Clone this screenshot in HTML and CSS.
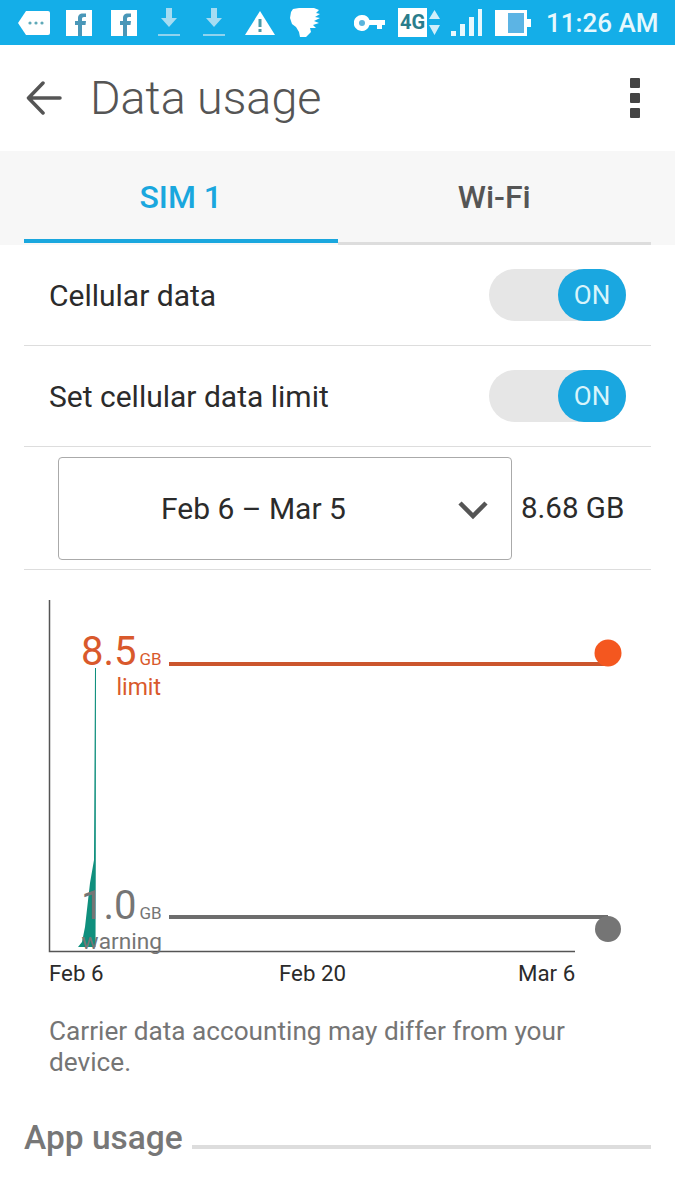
FILE: index.html
```html
<!DOCTYPE html>
<html lang="en">

<head>
  <meta charset="UTF-8">
  <meta name="viewport" content="width=device-width, initial-scale=1.0">
  <title>Data usage</title>
  <link rel="stylesheet" href="styles.css">
</head>

<body>
  <!-- status bar -->
  <div class="status">
    <div class="status-left">
      <svg class="ic" width="34" height="26" viewBox="0 0 34 26"><path d="M9 1h22a2 2 0 0 1 2 2v20a2 2 0 0 1-2 2H9L1 13z" fill="#fff"/><circle cx="13" cy="13" r="1.6" fill="#5fa9b8"/><circle cx="19" cy="13" r="1.6" fill="#5fa9b8"/><circle cx="25" cy="13" r="1.6" fill="#5fa9b8"/></svg>
      <svg class="ic fb" width="26" height="26" viewBox="0 0 26 26"><path d="M0 0h26v26H0z" fill="#fff"/><path d="M12 26V15H9v-4h3V8.500c0-3.500 1.500-5 5-5h3V7h-2c-1.500 0-2 .8-2 2v2h4l-.5 4H16v11z" fill="#4a97b8"/></svg>
      <svg class="ic fb2" width="26" height="26" viewBox="0 0 26 26"><path d="M0 0h26v26H0z" fill="#fff"/><path d="M12 26V15H9v-4h3V8.500c0-3.500 1.500-5 5-5h3V7h-2c-1.500 0-2 .8-2 2v2h4l-.5 4H16v11z" fill="#4a97b8"/></svg>
      <svg class="ic dl" width="22" height="30" viewBox="0 0 22 30"><path d="M8 0h6v10h5l-8 9-8-9h5z" fill="#a6dcf2"/><path d="M0 26h22v2H0z" fill="#8fd3ee"/></svg>
      <svg class="ic dl2" width="22" height="30" viewBox="0 0 22 30"><path d="M8 0h6v10h5l-8 9-8-9h5z" fill="#a6dcf2"/><path d="M0 26h22v2H0z" fill="#8fd3ee"/></svg>
      <svg class="ic warn" width="30" height="24" viewBox="0 0 30 24"><path d="M15 0l15 24H0z" fill="#fff"/><path d="M13.500 8h3v8h-3zM13.500 18h3v3h-3z" fill="#4a9aa8"/></svg>
      <svg class="ic thumb" width="30" height="32" viewBox="0 0 30 32"><path d="M3 2l6-1 15 0 5 2-3 3 4 1-5 3 5 1-6 3 5 2-6 2 3 3-6 0 1 4-5 5-6 0-1-5-3-5-4-3-2-6 1-6z" fill="#fff"/></svg>
    </div>
    <div class="status-right">
      <svg class="ic key" width="31" height="16" viewBox="0 0 31 16"><path d="M8 0a8 8 0 0 1 7.500 5H31v5h-3v4h-5v-4h-7.500A8 8 0 1 1 8 0z" fill="#fff"/><circle cx="8" cy="8" r="3" fill="#5bb4dc"/></svg>
      <span class="net">4G</span>
      <svg class="ic arrows" width="11" height="25" viewBox="0 0 11 25"><path d="M5.500 0L11 9H0zM5.500 25L0 15h11z" fill="#cfeefa"/></svg>
      <svg class="ic signal" width="31" height="28" viewBox="0 0 31 28"><path d="M0 22h5v5H0zM9 15h5v12H9zM18 8h5v19h-5zM27 0h4v27h-4z" fill="#e8f8fd"/></svg>
      <svg class="ic batt" width="36" height="26" viewBox="0 0 36 26"><path d="M0 0h32v26H0z" fill="#fff"/><path d="M13 3h16v20H13z" fill="#5cb4e4"/><path d="M32 9h4v8h-4z" fill="#fff"/></svg>
      <span class="time">11:26 AM</span>
    </div>
  </div>

  <!-- toolbar -->
  <div class="toolbar">
    <svg class="back" width="36" height="34" viewBox="0 0 36 34"><path d="M34 17H3M17 2L2.500 17 17 32" fill="none" stroke="#555" stroke-width="3.500" stroke-linecap="round" stroke-linejoin="round"/></svg>
    <div class="title">Data usage</div>
    <div class="more"><i></i><i></i><i></i></div>
  </div>

  <!-- tabs -->
  <div class="tabs">
    <div class="tab active">SIM 1</div>
    <div class="tab">Wi-Fi</div>
  </div>

  <div class="content">
    <div class="row">
      <span>Cellular data</span>
      <div class="toggle"><div class="knob">ON</div></div>
    </div>
    <div class="row">
      <span>Set cellular data limit</span>
      <div class="toggle"><div class="knob">ON</div></div>
    </div>
    <div class="cycle-row">
      <div class="cycle">
        <span>Feb 6 – Mar 5</span>
        <svg class="chev" width="32" height="20" viewBox="0 0 32 20"><path d="M3 3l13 13L29 3" fill="none" stroke="#555" stroke-width="4.500"/></svg>
      </div>
      <div class="total">8.68 GB</div>
    </div>

    <!-- chart, labels sit on a free canvas -->
    <div class="chart">
      <svg class="plot" width="627" height="400" viewBox="0 0 627 400">
        <path d="M25.500 30V381.500H551" fill="none" stroke="#555" stroke-width="1.500"/>
        <path d="M145 94H586" stroke="#cb552d" stroke-width="4"/>
        <circle cx="584" cy="83" r="13.500" fill="#f4571f"/>
        <path d="M145 347H584" stroke="#6d6d6d" stroke-width="4"/>
        <circle cx="584" cy="359" r="13" fill="#757575"/>
        <path d="M71 98h1L71.800 290l-.3 87H54l4-5 3-15 5-44 4-23z" fill="#0f8f7d"/>
      </svg>
      <div class="mark limit-num">8.5<small>GB</small></div>
      <div class="mark limit-txt">limit</div>
      <div class="mark warn-num">1.0<small>GB</small></div>
      <div class="mark warn-txt">warning</div>
      <div class="mark date d1">Feb 6</div>
      <div class="mark date d2">Feb 20</div>
      <div class="mark date d3">Mar 6</div>
    </div>

    <p class="note">Carrier data accounting may differ from your device.</p>

    <div class="app-head">
      <span>App usage</span>
      <div class="rule"></div>
    </div>
  </div>
</body>

</html>
```
FILE: styles.css
```css
* {
  box-sizing: border-box;
}

body {
  margin: 0;
  height: 1200px;
  overflow: hidden;
  background: #fff;
  font-family: Roboto, sans-serif;
  color: #2b2b2b;
}

/* status bar */
.status {
  height: 45px;
  background: #14aee8;
  display: flex;
  justify-content: space-between;
  align-items: center;
}

.status-left,
.status-right {
  display: flex;
  align-items: center;
}

.status-left {
  padding-left: 17px;
}

.ic {
  flex: none;
}

.fb {
  margin-left: 15px;
}

.fb2 {
  margin-left: 19px;
}

.dl {
  margin-left: 21px;
}

.dl2 {
  margin-left: 23px;
}

.warn {
  margin-left: 20px;
}

.thumb {
  margin-left: 15px;
}

.status-right {
  padding-right: 15px;
}

.net {
  width: 29px;
  height: 29px;
  margin-left: 13px;
  background: #fff;
  color: #2a7d8c;
  font-size: 20px;
  font-weight: 700;
  line-height: 29px;
  text-align: center;
}

.arrows {
  margin-left: 2px;
}

.signal {
  margin-left: 11px;
}

.batt {
  margin-left: 13px;
}

.time {
  width: 114px;
  margin-left: 15px;
  color: #e6f8fd;
  font-size: 26px;
  font-weight: 500;
  white-space: nowrap;
}

/* toolbar */
.toolbar {
  height: 106px;
  display: flex;
  align-items: center;
  padding: 0 35px 0 26px;
}

.back {
  flex: none;
}

.title {
  flex: 1;
  margin-left: 28px;
  color: #555;
  font-size: 46.700px;
  font-weight: 300;
}

.more i {
  display: block;
  width: 10px;
  height: 10px;
  margin: 5px 0;
  border-radius: 1px;
  background: #444;
}

/* tabs */
.tabs {
  height: 94px;
  padding: 0 24px;
  display: flex;
  background: #f7f7f7;
}

.tab {
  flex: 1;
  height: 94px;
  line-height: 92px;
  text-align: center;
  color: #555;
  font-size: 32px;
  font-weight: 500;
  border-bottom: 3px solid #ddd;
}

.tab.active {
  height: 92px;
  color: #1aa7de;
  border-bottom: 4px solid #1aa7de;
}

/* rows */
.content {
  padding: 0 24px;
}

.row {
  height: 101px;
  display: flex;
  align-items: center;
  justify-content: space-between;
  padding: 0 25px;
  border-bottom: 1px solid #ddd;
  font-size: 30px;
}

.toggle {
  width: 137px;
  height: 52px;
  border-radius: 26px;
  background: #e6e6e6;
  display: flex;
  justify-content: flex-end;
}

.knob {
  width: 68px;
  height: 52px;
  border-radius: 26px;
  background: #1aa7e0;
  color: #d8f4fb;
  font-size: 26px;
  line-height: 52px;
  text-align: center;
}

.cycle-row {
  height: 123px;
  display: flex;
  align-items: center;
  padding: 0 25px 0 34px;
  border-bottom: 1px solid #ddd;
}

.cycle {
  position: relative;
  flex: none;
  width: 454px;
  height: 103px;
  border: 1.500px solid #aaa;
  border-radius: 4px;
  font-size: 30px;
  line-height: 102px;
  padding-left: 102px;
}

.chev {
  position: absolute;
  right: 22px;
  top: 42px;
}

.total {
  margin-left: 9px;
  font-size: 29.500px;
  white-space: nowrap;
}

/* chart */
.chart {
  position: relative;
  height: 430px;
}

.plot {
  position: absolute;
  left: 0;
  top: 0;
}

.mark {
  position: absolute;
  white-space: nowrap;
}

.mark small {
  font-size: 17px;
  margin-left: 3px;
}

.limit-num {
  left: 57px;
  top: 58px;
  font-size: 40px;
  color: #d9592c;
}

.limit-txt {
  right: 490px;
  top: 104px;
  font-size: 23px;
  color: #d9592c;
}

.warn-num {
  left: 57px;
  top: 312px;
  font-size: 40px;
  color: #757575;
}

.warn-txt {
  right: 489px;
  top: 358px;
  font-size: 22.700px;
  color: #757575;
}

.date {
  top: 390px;
  font-size: 22.300px;
}

.d1 {
  left: 25px;
}

.d2 {
  left: 255px;
}

.d3 {
  left: 494px;
}

.note {
  margin: 16px 0 0;
  padding: 0 25px;
  color: #757575;
  font-size: 26.200px;
  line-height: 31px;
}

.app-head {
  margin-top: 40px;
  display: flex;
  align-items: center;
  color: #777;
  font-size: 33.500px;
  font-weight: 500;
}

.rule {
  flex: 1;
  height: 4px;
  margin: 18px 0 0 9px;
  background: #ddd;
}
```
